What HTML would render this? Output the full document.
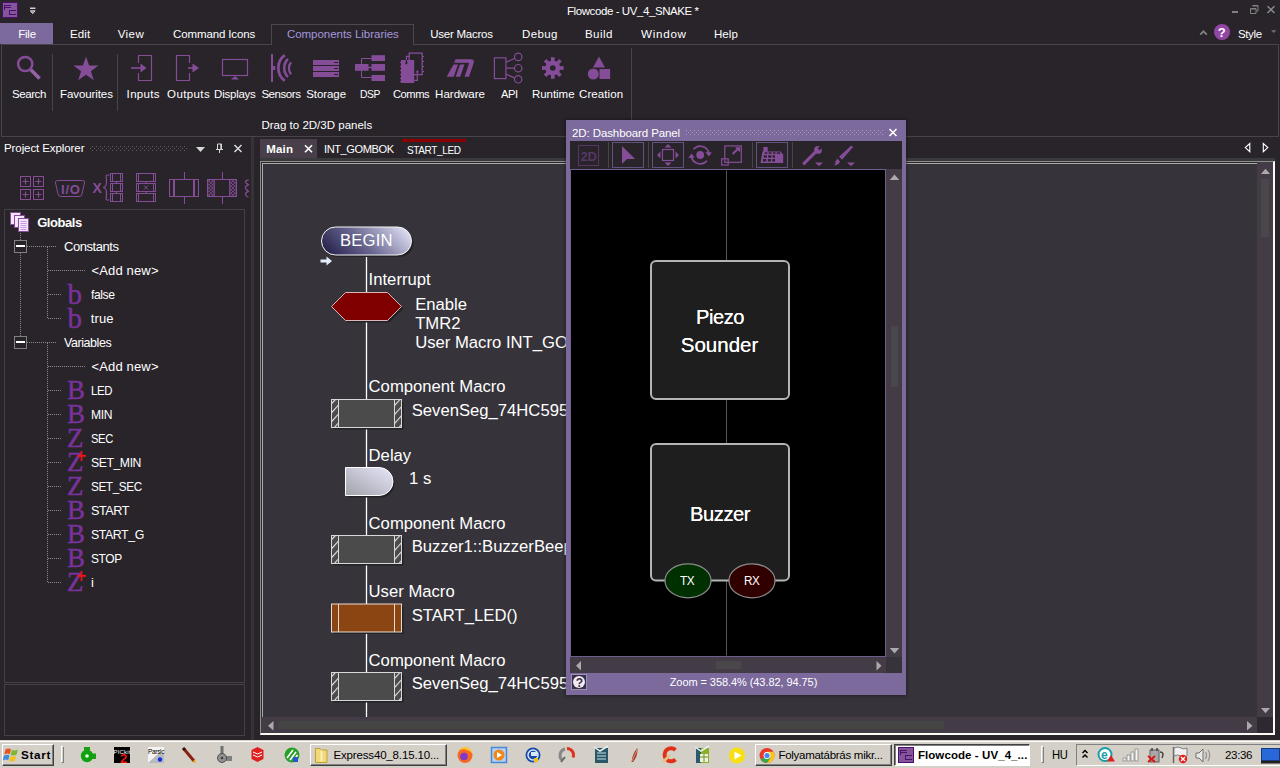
<!DOCTYPE html>
<html>
<head>
<meta charset="utf-8">
<title>Flowcode - UV_4_SNAKE *</title>
<style>
html,body{margin:0;padding:0;}
body{width:1280px;height:768px;overflow:hidden;background:#28242a;position:relative;
 font-family:"Liberation Sans",sans-serif;font-size:12px;color:#fff;}
.a{position:absolute;}
.t{position:absolute;white-space:nowrap;font-size:12px;color:#fff;}
svg{position:absolute;overflow:visible;}
.dot{position:absolute;height:1px;background:repeating-linear-gradient(90deg,#8e8492 0 1px,transparent 1px 2px);}
.dotv{position:absolute;width:1px;background:repeating-linear-gradient(180deg,#8e8492 0 1px,transparent 1px 2px);}
.tb{position:absolute;box-sizing:border-box;border:1px solid;border-color:#fff #404040 #404040 #fff;box-shadow:inset -1px -1px 0 #808080;background:#d4d0c8;}
</style>
</head>
<body>
<div class="a" style="left:2px;top:2px;width:14px;height:14px;background:#84559a;border:1px solid #4b0f6b;"></div>
<svg style="left:0;top:0" width="40" height="20"><path d="M4 5h7v1h-6v1h6v1h-6v2h-1zM9 10h7v1h-6v3h6v1h-7z" fill="#4b0f6b"/>
<path d="M30 7.400h5.400v1.500h-5.400z" fill="#d0d0d0"/><path d="M30.300 10.800h4.800l-2.400 2.900z" fill="#888" stroke="#e0e0e0" stroke-width="0.900"/></svg>
<div class="t" style="left:567.0px;top:5.3px;line-height:12px;letter-spacing:-0.42px;font-size:11.5px;">Flowcode - UV_4_SNAKE *</div>
<svg style="left:1226px;top:0" width="54" height="20">
 <rect x="6" y="11" width="6" height="2" fill="#808080"/>
 <path d="M26.500 5.500h5.500v5.500h-2M24.500 8.500h5.500v5h-5.500z" fill="none" stroke="#808080" stroke-width="1"/><path d="M26.500 6h5.500M24.500 9h5.500" stroke="#808080" stroke-width="1"/>
 <path d="M41.500 6.200l7 6.800M48.500 6.200l-7 6.800" stroke="#8a8a8a" stroke-width="1.500"/>
</svg>
<div class="a" style="left:0;top:23px;width:53px;height:21px;background:#7b6a9b;"></div>
<div class="a" style="left:1px;top:44px;width:1278px;height:93px;border:1px solid #47444a;box-sizing:border-box;"></div>
<div class="a" style="left:271px;top:24px;width:143px;height:21px;border:1px solid #4b484e;border-bottom:none;background:#28242a;box-sizing:border-box;"></div>
<div class="t" style="left:18.2px;top:28.2px;line-height:12px;letter-spacing:-0.21px;font-size:11.5px;">File</div>
<div class="t" style="left:70.0px;top:28.2px;line-height:12px;letter-spacing:0.09px;font-size:11.5px;">Edit</div>
<div class="t" style="left:117.7px;top:28.2px;line-height:12px;letter-spacing:0.43px;font-size:11.5px;">View</div>
<div class="t" style="left:173.1px;top:28.2px;line-height:12px;letter-spacing:-0.13px;font-size:11.5px;">Command Icons</div>
<div class="t" style="left:286.9px;top:28.2px;line-height:12px;letter-spacing:-0.03px;font-size:11.5px;color:#a596dc;">Components Libraries</div>
<div class="t" style="left:430.2px;top:28.2px;line-height:12px;letter-spacing:-0.24px;font-size:11.5px;">User Macros</div>
<div class="t" style="left:522.1px;top:28.2px;line-height:12px;letter-spacing:0.33px;font-size:11.5px;">Debug</div>
<div class="t" style="left:584.9px;top:28.2px;line-height:12px;letter-spacing:0.48px;font-size:11.5px;">Build</div>
<div class="t" style="left:640.7px;top:28.2px;line-height:12px;letter-spacing:0.70px;transform:scaleX(1.013);transform-origin:0 0;font-size:11.5px;">Window</div>
<div class="t" style="left:714.0px;top:28.2px;line-height:12px;letter-spacing:0.05px;font-size:11.5px;">Help</div>
<div class="t" style="left:1237.9px;top:28.2px;line-height:12px;letter-spacing:-0.34px;font-size:11.5px;">Style</div>
<svg style="left:1198px;top:24px" width="82" height="20">
 <path d="M2.200 10.600l3.300-3.300l3.300 3.300" fill="none" stroke="#808080" stroke-width="1.800"/>
 <circle cx="24" cy="8" r="8" fill="#9246a4"/>
 <path d="M73 6.300h5.400l-2.700 2.700z" fill="#707070"/>
</svg>
<div class="t" style="left:1217.8px;top:24.5px;line-height:15px;font-size:13px;font-weight:bold;">?</div>
<div class="t" style="left:12.1px;top:88.3px;line-height:12px;letter-spacing:-0.45px;font-size:11.5px;">Search</div>
<div class="t" style="left:60.1px;top:88.3px;line-height:12px;letter-spacing:-0.10px;font-size:11.5px;">Favourites</div>
<div class="t" style="left:126.6px;top:88.3px;line-height:12px;letter-spacing:0.34px;font-size:11.5px;">Inputs</div>
<div class="t" style="left:167.1px;top:88.3px;line-height:12px;letter-spacing:0.38px;font-size:11.5px;">Outputs</div>
<div class="t" style="left:214.1px;top:88.3px;line-height:12px;letter-spacing:-0.24px;font-size:11.5px;">Displays</div>
<div class="t" style="left:261.4px;top:88.3px;line-height:12px;letter-spacing:-0.45px;font-size:11.5px;">Sensors</div>
<div class="t" style="left:306.2px;top:88.3px;line-height:12px;letter-spacing:-0.06px;font-size:11.5px;">Storage</div>
<div class="t" style="left:360.2px;top:88.3px;line-height:12px;letter-spacing:-0.45px;transform:scaleX(0.897);transform-origin:0 0;font-size:11.5px;">DSP</div>
<div class="t" style="left:393.1px;top:88.3px;line-height:12px;letter-spacing:-0.45px;transform:scaleX(0.968);transform-origin:0 0;font-size:11.5px;">Comms</div>
<div class="t" style="left:435.1px;top:88.3px;line-height:12px;letter-spacing:0.01px;font-size:11.5px;">Hardware</div>
<div class="t" style="left:500.6px;top:88.3px;line-height:12px;letter-spacing:-0.45px;transform:scaleX(0.970);transform-origin:0 0;font-size:11.5px;">API</div>
<div class="t" style="left:532.0px;top:88.3px;line-height:12px;letter-spacing:-0.05px;font-size:11.5px;">Runtime</div>
<div class="t" style="left:579.0px;top:88.3px;line-height:12px;letter-spacing:0.09px;font-size:11.5px;">Creation</div>
<div class="t" style="left:261.4px;top:119.3px;line-height:12px;letter-spacing:0.01px;font-size:11.5px;">Drag to 2D/3D panels</div>
<div class="a" style="left:52px;top:54px;width:1px;height:57px;background:#47444a;"></div>
<div class="a" style="left:117px;top:54px;width:1px;height:57px;background:#47444a;"></div>
<div class="a" style="left:631px;top:48px;width:1px;height:72px;background:#47444a;"></div>
<svg style="left:0;top:0" width="640" height="136" fill="none" stroke="#854c97" stroke-width="1.200">
 <circle cx="25.200" cy="64" r="7.100" stroke-width="2.500"/>
 <path d="M30.800 69.800l8.800 8.700" stroke-width="3.600" stroke="#9562a6"/>
 <polygon points="86.0,56.4 89.1,65.4 98.600,65.500 90.900,71.200 93.800,80.300 86.0,74.800 78.200,80.300 81.100,71.200 73.400,65.500 82.900,65.400" fill="#854c97" stroke="none"/>
 <path d="M138.500 63V55.500h13v25h-13V73"/>
 <path d="M131 68h11" stroke-width="1.600"/><path d="M140.500 63.500l6 4.500l-6 4.500z" fill="#854c97" stroke="none"/>
 <path d="M189.500 63V55.500h-13v25h13V73"/>
 <path d="M188 68h6" stroke-width="1.600"/><path d="M192.500 63.500l6.500 4.500l-6.500 4.500z" fill="#854c97" stroke="none"/>
 <rect x="222.500" y="59.500" width="25" height="16"/>
 <path d="M231 79.500l4-3.500l4 3.500z" fill="#854c97" stroke="none"/>
 <path d="M272 54v28" stroke-width="2"/><path d="M273 68h2.200" stroke-width="4"/>
 <path d="M284.800 55.200a15.900 15.900 0 0 0 0 25.600" stroke-width="2.700"/>
 <path d="M287.950 59a12.700 12.700 0 0 0 0 18" stroke-width="2.500"/>
 <path d="M291.100 62.200a9.300 9.300 0 0 0 0 12" stroke-width="2.200"/>
 <g fill="#854c97" stroke="none"><rect x="313" y="60" width="26" height="5"/><rect x="313" y="66" width="26" height="5"/><rect x="313" y="72" width="26" height="5"/></g>
 <path d="M334 62.500h4M334 68.500h4M334 74.500h4" stroke="#28242a" stroke-width="1"/>
 <g fill="#854c97" stroke="none"><rect x="355" y="64" width="13.500" height="6.800"/><rect x="371.500" y="55.200" width="13.500" height="5.800"/><rect x="371.500" y="64" width="13.500" height="6.800"/><rect x="371.500" y="75" width="13.500" height="6"/></g>
 <path d="M368 67.500h4" stroke-width="1.400"/><path d="M361.500 64v-5.500h10M361.500 71v6.500h10" stroke-width="1"/>
 <rect x="409.200" y="53.100" width="13" height="21.600" stroke-width="1.300"/>
 <rect x="401" y="60" width="13.200" height="23" fill="#854c97" stroke="none"/>
 <path d="M400 62.500h1.200M400 66.500h1.200M400 70.500h1.200M400 74.500h1.200M400 78.500h1.200M400 81.500h1.200M422.500 56.500h1.500M422.500 61.500h1.500M422.500 66.500h1.500M422.500 71.500h1.500" stroke-width="1"/>
 <path d="M409.200 56.300h-2.800v4" stroke-width="1.200"/><path d="M406.400 60v3.500" stroke="#28242a" stroke-width="1.200"/><path d="M404.800 62.500h3.200l-1.600 2.200z" fill="#28242a" stroke="none"/>
 <path d="M414.200 80.400h3.100v-8" stroke-width="1.200"/><path d="M415.600 72.500h3.400l-1.700-2.400z" fill="#854c97" stroke="none"/>
 <g fill="#854c97" stroke="none">
  <path d="M455.500 59.300h14.500c3.500 0 4.500 1.200 3.600 4l-4.600 13.500h-4.500l4.300-12.500c0.400-1.200 0-1.500-1.200-1.500h-13.500z"/>
  <path d="M453.500 64.500h4.500l-4.300 12.300h-7z"/>
  <path d="M460 64.500h4.500l-4.300 12.300h-4.500z"/>
 </g>
 <rect x="494.400" y="57.800" width="11.500" height="20.800" stroke-width="1.200"/>
 <circle cx="518.200" cy="56.900" r="3.700" stroke-width="1.200"/><circle cx="518.200" cy="68.200" r="3.700" stroke-width="1.200"/><circle cx="518.200" cy="79.300" r="3.700" stroke-width="1.200"/>
 <path d="M506 68.200h8.400M506 62.300l9-4M506 74.100l9 4" stroke-width="1.200"/>
 <path fill="#854c97" stroke="none" fill-rule="evenodd" d="M551.0,60.700 L550.900,57.200 L554.700,57.200 L554.600,60.700 L556.700,61.600 L559.200,59.0 L561.800,61.600 L559.200,64.100 L560.100,66.200 L563.600,66.100 L563.600,69.900 L560.100,69.800 L559.200,71.900 L561.800,74.400 L559.200,77.0 L556.700,74.400 L554.600,75.300 L554.700,78.800 L550.900,78.800 L551.0,75.300 L548.900,74.400 L546.400,77.0 L543.800,74.400 L546.400,71.900 L545.500,69.800 L542.0,69.900 L542.0,66.100 L545.500,66.200 L546.400,64.100 L543.800,61.600 L546.400,59.0 L548.900,61.600Z M555.600 68a2.800 2.800 0 1 0 -5.600 0a2.800 2.800 0 1 0 5.600 0z"/>
 <g fill="#854c97" stroke="none"><path d="M599 56.500l6 11h-12z"/><circle cx="593.300" cy="74" r="5.500"/><rect x="599.500" y="69" width="10.600" height="10"/></g>
</svg>
<div class="t" style="left:4.0px;top:142.4px;line-height:12px;letter-spacing:-0.09px;font-size:11.5px;">Project Explorer</div>
<div class="a" style="left:4px;top:209px;width:241px;height:474px;border:1px solid #444146;box-sizing:border-box;"></div>
<div class="a" style="left:4px;top:684px;width:241px;height:52px;border:1px solid #444146;box-sizing:border-box;"></div>
<div class="a" style="left:251px;top:137px;width:3px;height:603px;background:#363338;"></div>
<svg style="left:0;top:138px" width="250" height="70" fill="none" stroke="#854c97" stroke-width="1">
 <defs><pattern id="grip" width="4" height="4" patternUnits="userSpaceOnUse"><rect x="0" y="0" width="1" height="1" fill="#625e66" stroke="none"/><rect x="2" y="2" width="1" height="1" fill="#625e66" stroke="none"/></pattern>
 <pattern id="xh" x="207.500" y="41.500" width="3.400" height="3.400" patternUnits="userSpaceOnUse"><path d="M0 0l3.400 3.400M3.400 0l-3.400 3.400" stroke="#854c97" stroke-width="0.800"/></pattern></defs>
 <rect x="90" y="7" width="97" height="7" fill="url(#grip)" stroke="none"/>
 <path d="M196 9h9l-4.500 5z" fill="#d8d8d8" stroke="none"/>
 <path d="M217.500 11.500v-5.500h4v5.500M216 11.500h7M219.500 11.500v3.500" stroke="#d8d8d8" stroke-width="1"/><path d="M221 6v5.500" stroke="#d8d8d8" stroke-width="1.400"/>
 <path d="M234.500 7l7 7M241.500 7l-7 7" stroke="#d8d8d8" stroke-width="1.500"/>
 <g><rect x="20.500" y="38.500" width="10" height="10"/><rect x="33.500" y="38.500" width="10" height="10"/><rect x="20.500" y="51.500" width="10" height="10"/><rect x="33.500" y="51.500" width="10" height="10"/>
 <path d="M22.500 43.500h6M25.500 40.500v6M35.500 43.500h6M38.500 40.500v6M22.500 56.500h6M25.500 53.500v6M35.500 56.500h6M38.500 53.500v6"/></g>
 <path d="M57.500 42.500h25q2.500 0 2 2.500l-2.500 11q-0.600 2.500-3 2.500h-18q-2.400 0-3-2.500l-2.500-11q-0.500-2.500 2-2.500z"/>
 <path d="M109.500 37c-5 0-3 0-3 6.500c0 4-1.500 6-3.500 6c2 0 3.500 2 3.500 6c0 6.500-2 6.500 3 6.500" stroke-width="1.200"/>
 <g><rect x="110.500" y="35.500" width="12" height="8"/><rect x="110.500" y="45.500" width="12" height="8"/><rect x="110.500" y="55.500" width="12" height="8"/><path d="M112.500 35.500v8M120.500 35.500v8M112.500 45.500v8M120.500 45.500v8M112.500 55.500v8M120.500 55.500v8M116.500 43.500v2M116.500 53.500v2"/></g>
 <g><rect x="136.500" y="35.500" width="19" height="8"/><rect x="136.500" y="45.500" width="19" height="8"/><rect x="136.500" y="55.500" width="19" height="8"/><path d="M138.500 35.500v8M153.500 35.500v8M138.500 45.500v8M153.500 45.500v8M138.500 55.500v8M153.500 55.500v8M146 43.500v2M146 53.500v2M144 47.500l4 4M148 47.500l-4 4"/></g>
 <g><rect x="169.500" y="41.500" width="29" height="17"/><path d="M174 41.500v17M194 41.500v17" stroke-width="2"/><path d="M184.500 34v7.500M184.500 58.500v7.500"/></g>
 <g><rect x="207.500" y="41.500" width="6.800" height="17" fill="url(#xh)"/><rect x="229.700" y="41.500" width="6.800" height="17" fill="url(#xh)"/><rect x="207.500" y="41.500" width="29" height="17"/><path d="M222.500 34v7.500M222.500 58.500v7.500"/></g>
 <path d="M248.700 41.800q-6.500 1.400-0.300 4.800q-6.200 3.200 0 6.500q-6.200 3.300 0 6.200" stroke-width="1.200"/>
</svg>
<div class="t" style="left:61.1px;top:181.5px;line-height:15px;letter-spacing:0.70px;font-size:13px;font-weight:bold;color:#854c97;">I/O</div>
<div class="t" style="left:92.6px;top:180.0px;line-height:16px;font-size:14px;font-weight:bold;color:#854c97;">X</div>
<svg style="left:10px;top:212px" width="22" height="22">
 <g fill="#f4e4fa" stroke="#854c97" stroke-width="1"><rect x="0.500" y="0.500" width="10" height="12"/><rect x="4.500" y="3.500" width="10" height="12"/><rect x="8.500" y="6.500" width="10" height="13"/></g>
 <path d="M10.500 9.500h6M10.500 11.500h6M10.500 13.500h6M10.500 15.500h6M10.500 17.500h6" stroke="#c79be0" stroke-width="1"/>
</svg>
<div class="t" style="left:37.2px;top:215.2px;line-height:15px;letter-spacing:-0.45px;font-size:13px;font-weight:bold;">Globals</div>
<div class="dotv" style="left:20px;top:233px;height:110px;"></div>
<div class="dotv" style="left:47px;top:247px;height:72px;"></div>
<div class="dotv" style="left:47px;top:343px;height:240px;"></div>
<div class="t" style="left:64.0px;top:239.2px;line-height:15px;letter-spacing:-0.45px;font-size:13px;">Constants</div>
<div class="dot" style="left:27px;top:246px;width:30px;"></div>
<div class="a" style="left:14px;top:240px;width:11px;height:11px;border:1px solid #808080;background:#28242a;"></div>
<div class="a" style="left:16px;top:245px;width:9px;height:2px;background:#fff;"></div>
<div class="t" style="left:91.5px;top:263.2px;line-height:15px;letter-spacing:0.15px;font-size:13px;">&lt;Add new&gt;</div>
<div class="dot" style="left:48px;top:270px;width:38px;"></div>
<div class="t" style="left:90.8px;top:287.2px;line-height:15px;letter-spacing:-0.45px;transform:scaleX(0.935);transform-origin:0 0;font-size:13px;">false</div>
<div class="t" style="left:67.6px;top:277.5px;line-height:32px;font-size:29px;color:#78329a;font-family:'Liberation Serif',serif;-webkit-text-stroke:0.45px #78329a;">b</div>
<div class="dot" style="left:48px;top:294px;width:14px;"></div>
<div class="t" style="left:90.8px;top:311.2px;line-height:15px;letter-spacing:0.10px;font-size:13px;">true</div>
<div class="t" style="left:67.6px;top:301.5px;line-height:32px;font-size:29px;color:#78329a;font-family:'Liberation Serif',serif;-webkit-text-stroke:0.45px #78329a;">b</div>
<div class="dot" style="left:48px;top:318px;width:14px;"></div>
<div class="t" style="left:64.0px;top:335.2px;line-height:15px;letter-spacing:-0.45px;transform:scaleX(0.961);transform-origin:0 0;font-size:13px;">Variables</div>
<div class="dot" style="left:27px;top:342px;width:30px;"></div>
<div class="a" style="left:14px;top:336px;width:11px;height:11px;border:1px solid #808080;background:#28242a;"></div>
<div class="a" style="left:16px;top:341px;width:9px;height:2px;background:#fff;"></div>
<div class="t" style="left:91.5px;top:359.2px;line-height:15px;letter-spacing:0.15px;font-size:13px;">&lt;Add new&gt;</div>
<div class="dot" style="left:48px;top:366px;width:38px;"></div>
<div class="t" style="left:90.8px;top:383.2px;line-height:15px;letter-spacing:-0.45px;transform:scaleX(0.877);transform-origin:0 0;font-size:13px;">LED</div>
<div class="t" style="left:66.9px;top:375.0px;line-height:30px;font-size:27px;color:#78329a;font-family:'Liberation Serif',serif;-webkit-text-stroke:0.45px #78329a;">B</div>
<div class="dot" style="left:48px;top:390px;width:14px;"></div>
<div class="t" style="left:90.8px;top:407.2px;line-height:15px;letter-spacing:-0.45px;transform:scaleX(0.933);transform-origin:0 0;font-size:13px;">MIN</div>
<div class="t" style="left:66.9px;top:399.0px;line-height:30px;font-size:27px;color:#78329a;font-family:'Liberation Serif',serif;-webkit-text-stroke:0.45px #78329a;">B</div>
<div class="dot" style="left:48px;top:414px;width:14px;"></div>
<div class="t" style="left:90.6px;top:431.2px;line-height:15px;letter-spacing:-0.45px;transform:scaleX(0.863);transform-origin:0 0;font-size:13px;">SEC</div>
<div class="t" style="left:66.9px;top:423.0px;line-height:30px;font-size:27px;color:#78329a;font-family:'Liberation Serif',serif;-webkit-text-stroke:0.45px #78329a;">Z</div>
<div class="dot" style="left:48px;top:438px;width:14px;"></div>
<div class="t" style="left:90.6px;top:455.2px;line-height:15px;letter-spacing:-0.45px;transform:scaleX(0.940);transform-origin:0 0;font-size:13px;">SET_MIN</div>
<div class="t" style="left:66.9px;top:447.0px;line-height:30px;font-size:27px;color:#78329a;font-family:'Liberation Serif',serif;-webkit-text-stroke:0.45px #78329a;">Z</div>
<svg style="left:77px;top:451px" width="9" height="10"><path d="M0 4.800h9M4.500 0v10" stroke="#f01414" stroke-width="1.700"/></svg>
<div class="dot" style="left:48px;top:462px;width:14px;"></div>
<div class="t" style="left:90.6px;top:479.2px;line-height:15px;letter-spacing:-0.45px;transform:scaleX(0.904);transform-origin:0 0;font-size:13px;">SET_SEC</div>
<div class="t" style="left:66.9px;top:471.0px;line-height:30px;font-size:27px;color:#78329a;font-family:'Liberation Serif',serif;-webkit-text-stroke:0.45px #78329a;">Z</div>
<div class="dot" style="left:48px;top:486px;width:14px;"></div>
<div class="t" style="left:90.6px;top:503.2px;line-height:15px;letter-spacing:-0.45px;transform:scaleX(0.972);transform-origin:0 0;font-size:13px;">START</div>
<div class="t" style="left:66.9px;top:495.0px;line-height:30px;font-size:27px;color:#78329a;font-family:'Liberation Serif',serif;-webkit-text-stroke:0.45px #78329a;">B</div>
<div class="dot" style="left:48px;top:510px;width:14px;"></div>
<div class="t" style="left:90.6px;top:527.2px;line-height:15px;letter-spacing:-0.45px;transform:scaleX(0.951);transform-origin:0 0;font-size:13px;">START_G</div>
<div class="t" style="left:66.9px;top:519.0px;line-height:30px;font-size:27px;color:#78329a;font-family:'Liberation Serif',serif;-webkit-text-stroke:0.45px #78329a;">B</div>
<div class="dot" style="left:48px;top:534px;width:14px;"></div>
<div class="t" style="left:90.6px;top:551.2px;line-height:15px;letter-spacing:-0.45px;transform:scaleX(0.920);transform-origin:0 0;font-size:13px;">STOP</div>
<div class="t" style="left:66.9px;top:543.0px;line-height:30px;font-size:27px;color:#78329a;font-family:'Liberation Serif',serif;-webkit-text-stroke:0.45px #78329a;">B</div>
<div class="dot" style="left:48px;top:558px;width:14px;"></div>
<div class="t" style="left:91.1px;top:575.2px;line-height:15px;font-size:13px;">i</div>
<div class="t" style="left:66.9px;top:567.0px;line-height:30px;font-size:27px;color:#78329a;font-family:'Liberation Serif',serif;-webkit-text-stroke:0.45px #78329a;">Z</div>
<svg style="left:77px;top:571px" width="9" height="10"><path d="M0 4.800h9M4.500 0v10" stroke="#f01414" stroke-width="1.700"/></svg>
<div class="dot" style="left:48px;top:582px;width:14px;"></div>
<div class="a" style="left:260px;top:139px;width:57px;height:19px;background:#483f4a;"></div>
<div class="a" style="left:260px;top:158px;width:1015px;height:3px;background:#3a393c;"></div>
<div class="t" style="left:266.2px;top:142.6px;line-height:12px;letter-spacing:0.20px;font-size:11.5px;font-weight:bold;">Main</div>
<svg style="left:304px;top:144px" width="10" height="10"><path d="M1 1.200l7 7M8 1.200l-7 7" stroke="#fff" stroke-width="1.600"/></svg>
<div class="t" style="left:323.8px;top:142.6px;line-height:12px;letter-spacing:-0.45px;transform:scaleX(0.965);transform-origin:0 0;font-size:11.5px;">INT_GOMBOK</div>
<div class="t" style="left:406.9px;top:144.2px;line-height:12px;letter-spacing:-0.45px;transform:scaleX(0.874);transform-origin:0 0;font-size:11.5px;">START_LED</div>
<div class="a" style="left:402px;top:139px;width:64px;height:3px;background:#8b0000;"></div>
<svg style="left:0;top:0" width="1280" height="160"><path d="M1249.800 143.500v8.200l-4.500-4.100zM1263.300 143.500v8.200l4.500-4.100z" fill="none" stroke="#fff" stroke-width="1.100"/></svg>
<div class="a" style="left:260px;top:161px;width:1015px;height:574px;background:#36343a;box-sizing:border-box;border-style:solid;border-width:1px 2px 2px 1px;border-color:#8e8e88 #fbfbf3 #fbfbf3 #8e8e88;"></div>
<div class="a" style="left:261px;top:162px;width:996px;height:555px;box-sizing:border-box;border-style:solid;border-width:1px 0 0 1px;border-color:#2c2a2e;"></div>
<div class="a" style="left:262px;top:163px;width:995px;height:554px;box-sizing:border-box;border-style:solid;border-width:1px 0 0 1px;border-color:#aaaaa2;"></div>
<div class="a" style="left:1257px;top:162px;width:16px;height:555px;background:#433b45;"></div>
<div class="a" style="left:261px;top:717px;width:996px;height:16px;background:#433b45;"></div>
<div class="a" style="left:1257px;top:717px;width:16px;height:16px;background:#2e2830;"></div>
<div class="a" style="left:1261px;top:179px;width:8px;height:58px;background:#4a474b;"></div>
<div class="a" style="left:278px;top:721px;width:666px;height:8px;background:#464546;"></div>
<svg style="left:0;top:0" width="1280" height="740" fill="#aaa">
 <path d="M1261 174h9l-4.500-5.200zM1261 708h9l-4.500 5.200z"/>
 <path d="M1247 721v9.500l5.500-4.750zM273.500 721v9.500l-5.500-4.750z"/>
</svg>
<svg style="left:0;top:0" width="566" height="717">
 <defs>
  <linearGradient id="gbeg" x1="0" y1="0.600" x2="1" y2="0.300"><stop offset="0" stop-color="#2a2850"/><stop offset="0.450" stop-color="#6c6a92"/><stop offset="1" stop-color="#dcdcf2"/></linearGradient>
  <linearGradient id="gdel" x1="1" y1="0" x2="0" y2="1"><stop offset="0" stop-color="#e6e6fa"/><stop offset="1" stop-color="#a2a2aa"/></linearGradient>
  <pattern id="hat" width="6" height="6" patternUnits="userSpaceOnUse" patternTransform="rotate(-48)"><rect width="6" height="6" fill="#4b4b4b"/><rect width="6" height="1.100" fill="#e8e8e8"/></pattern>
 </defs>
 <path d="M366.500 255v462" stroke="#fff" stroke-width="1.300"/>
 <rect x="323.500" y="229" width="90" height="28" rx="14" fill="#242226"/>
 <rect x="321.500" y="227" width="90" height="28" rx="14" fill="url(#gbeg)" stroke="#f4f4f4" stroke-width="1"/>
 <path d="M320.500 259.500h6v-3l5.500 4.500l-5.500 4.500v-3h-6z" fill="#e4ecfc"/>
 <path d="M333.500 308.500l14-14h42l14 14l-14 14h-42z" fill="#242226"/>
 <path d="M331.500 306.500l14-14h42l14 14l-14 14h-42z" fill="#800000" stroke="#d8b8b8" stroke-width="1"/>
 <g id="cm"><rect x="333.500" y="401.500" width="70" height="28" fill="#242226"/><rect x="331.500" y="399.500" width="70" height="28" fill="url(#hat)" stroke="#d8d8d8"/><rect x="338.500" y="399.500" width="56" height="28" fill="#4b4b4b" stroke="#d8d8d8"/></g>
 <use href="#cm" y="136"/><use href="#cm" y="273"/>
 <path d="M347.500 469.500h33a14 14 0 0 1 0 28h-33z" fill="#242226"/>
 <path d="M345.500 467.500h33.500a14 14 0 0 1 0 28h-33.500z" fill="url(#gdel)" stroke="#fff" stroke-width="1"/>
 <rect x="333.500" y="606" width="70" height="28" fill="#242226"/>
 <rect x="331.500" y="604" width="70" height="28" fill="#8b4513" stroke="#e8dcd0"/>
 <path d="M338.500 604v28M394.500 604v28" stroke="#e8dcd0"/>
</svg>
<div class="t" style="left:339.9px;top:230.7px;line-height:19px;letter-spacing:0.23px;font-size:16.67px;">BEGIN</div>
<div class="t" style="left:368.6px;top:270.3px;line-height:19px;font-size:16.67px;">Interrupt</div>
<div class="t" style="left:415.2px;top:294.8px;line-height:19px;font-size:16.67px;">Enable</div>
<div class="t" style="left:415.2px;top:313.7px;line-height:19px;font-size:16.67px;">TMR2</div>
<div class="a" style="left:414.2px;top:330.6px;width:151.8px;height:22px;overflow:hidden;"><div class="t" style="left:1.0px;top:2.0px;line-height:19px;font-size:16.67px;">User Macro INT_GOMBOK</div></div>
<div class="t" style="left:368.6px;top:376.9px;line-height:19px;font-size:16.67px;">Component Macro</div>
<div class="a" style="left:410.7px;top:399.2px;width:155.3px;height:22px;overflow:hidden;"><div class="t" style="left:1.0px;top:2.0px;line-height:19px;font-size:16.67px;">SevenSeg_74HC595</div></div>
<div class="t" style="left:368.6px;top:446.0px;line-height:19px;font-size:16.67px;">Delay</div>
<div class="t" style="left:409.0px;top:469.2px;line-height:19px;font-size:16.67px;">1 s</div>
<div class="t" style="left:368.6px;top:514.0px;line-height:19px;font-size:16.67px;">Component Macro</div>
<div class="a" style="left:410.7px;top:535.3px;width:155.3px;height:22px;overflow:hidden;"><div class="t" style="left:1.0px;top:2.0px;line-height:19px;font-size:16.67px;">Buzzer1::BuzzerBeep</div></div>
<div class="t" style="left:368.6px;top:582.3px;line-height:19px;font-size:16.67px;">User Macro</div>
<div class="t" style="left:411.7px;top:606.3px;line-height:19px;font-size:16.67px;">START_LED()</div>
<div class="t" style="left:368.6px;top:651.3px;line-height:19px;font-size:16.67px;">Component Macro</div>
<div class="a" style="left:410.7px;top:672.3px;width:155.3px;height:22px;overflow:hidden;"><div class="t" style="left:1.0px;top:2.0px;line-height:19px;font-size:16.67px;">SevenSeg_74HC595</div></div>
<div class="a" style="left:566px;top:120px;width:340px;height:575px;background:#7b6a9b;box-shadow:0 0 3px 1px rgba(10,8,12,0.4);"></div>
<div class="a" style="left:570px;top:141px;width:332px;height:29px;background:#28242a;"></div>
<div class="a" style="left:570px;top:169px;width:332px;height:504px;background:#433b45;"></div>
<div class="a" style="left:571px;top:170px;width:314px;height:486px;background:#000;box-shadow:0 0 0 1px #6e5e8c;"></div>
<div class="a" style="left:886px;top:657px;width:16px;height:16px;background:#36343a;"></div>
<div class="a" style="left:891px;top:326px;width:7px;height:61px;background:#4a474b;"></div>
<div class="a" style="left:716px;top:661px;width:25px;height:8px;background:#4a474b;"></div>
<div class="t" style="left:572.0px;top:127.2px;line-height:12px;letter-spacing:-0.10px;font-size:11.5px;">2D: Dashboard Panel</div>
<svg style="left:0;top:0" width="910" height="700" fill="none" stroke="#854c97" stroke-width="1">
 <defs><pattern id="grip2" width="4" height="4" patternUnits="userSpaceOnUse"><rect x="0" y="0" width="1" height="1" fill="#a898c4" stroke="none"/><rect x="2" y="2" width="1" height="1" fill="#a898c4" stroke="none"/></pattern></defs>
 <rect x="686" y="130" width="198" height="6" fill="url(#grip2)" stroke="none"/>
 <path d="M889.500 129l7 7M896.500 129l-7 7" stroke="#fff" stroke-width="1.600"/>
 <!-- 2D button (disabled) -->
 <rect x="578.500" y="145.500" width="20" height="20" stroke="#553664"/>
 <!-- separators -->
 <path d="M608.500 142v26M648.500 142v26M752.500 142v26M792.500 142v26" stroke="#47444a"/>
 <!-- play -->
 <rect x="612.500" y="142.500" width="31" height="25" stroke="#62527e"/>
 <path d="M622 146.200v17.500l4.800-4.600l8 0z" fill="#854c97" stroke="none"/><path d="M622 146.200l13 12.900h-8.200l-4.800 4.600z" fill="#854c97" stroke="none"/>
 <!-- move -->
 <rect x="652.500" y="142.500" width="31" height="25" stroke="#62527e"/>
 <rect x="662.500" y="149.500" width="11" height="11" stroke-width="1.200"/>
 <path d="M664.500 147.500l3.500-3.500l3.500 3.500zM664.500 162.500l3.500 3.500l3.500-3.500zM660.500 151.500l-3.500 3.500l3.500 3.500zM675.500 151.500l3.500 3.500l-3.500 3.500z" fill="#854c97" stroke="none"/>
 <!-- rotate -->
 <circle cx="700.200" cy="155" r="3.900" fill="#854c97" stroke="none"/>
 <path d="M693.500 149.300a8.800 8.800 0 0 1 15.400 4.200M706.900 160.700a8.800 8.800 0 0 1 -15.400-4.200" stroke-width="1.700"/>
 <path d="M705.300 152l6.700 0.500l-3.200 3.900zM688.200 158l6.600-0.500l-3.300-3.900z" fill="#854c97" stroke="none"/>
 <!-- resize -->
 <rect x="724.800" y="145.900" width="16.500" height="16.400" stroke-width="1.200"/>
 <rect x="721.600" y="158.800" width="6.600" height="6.200" stroke-width="1.200"/>
 <path d="M732.600 154l5.500-5.300" stroke-width="2"/><path d="M735 147.300h5.200v5.300z" fill="#854c97" stroke="none"/>
 <!-- grid button -->
 <rect x="756.500" y="142.500" width="31" height="25" stroke="#62527e"/>
 <path d="M763.300 147h4.400v4.500h12.800l2.700 3v8.500h-22.700l2-11.500h0.800z" fill="#854c97" stroke="none"/>
 <g fill="#28242a" stroke="none"><rect x="764.800" y="152.300" width="2.600" height="1.500"/><rect x="768.700" y="152.300" width="2.900" height="1.500"/><rect x="773" y="152.300" width="2.500" height="1.500"/><rect x="776.800" y="152.300" width="3.400" height="1.500"/>
 <rect x="763.800" y="155.300" width="3" height="2.300"/><rect x="768.200" y="155.300" width="3.100" height="2.300"/><rect x="772.600" y="155.300" width="2.400" height="2.300"/>
 <rect x="763" y="159.100" width="3.200" height="2.400"/><rect x="767.800" y="159.100" width="3.200" height="2.400"/><rect x="772.400" y="159.100" width="2.600" height="2.400"/></g>
 <!-- wrench -->
 <path d="M803.200 164.300l12.200-12.200" stroke-width="3.100"/>
 <circle cx="818" cy="149.900" r="3.900" fill="#854c97" stroke="none"/>
 <path d="M818.700 149.200l4.500-4.500" stroke="#28242a" stroke-width="2.700"/>
 <path d="M815 162.500h8l-4 3.800z" fill="#854c97" stroke="none"/>
 <!-- brush -->
 <path d="M839 156.800l12.300-11.400l1.800 1.600l-11.100 12.800z" fill="#854c97" stroke="none"/>
 <path d="M836.800 158.200l3.200 3c-0.500 2.800-3.500 4.300-6 4c1.600-1.200 1.800-2.700 1.200-4c1.300-0.700 1.800-1.700 1.600-3z" fill="#854c97" stroke="none"/>
 <path d="M847 162.500h8l-4 3.800z" fill="#854c97" stroke="none"/>
 <!-- scroll arrows -->
 <g fill="#aaa" stroke="none"><path d="M889.700 180h9.600l-4.800-5.400zM889.700 648h9.600l-4.800 5.400zM581 661v9.500l-5-4.750zM876.500 661v9.500l5-4.750z"/></g>
 <!-- content -->
 <path d="M726.500 170.500v485" stroke="#565656"/>
 <rect x="651" y="261" width="138" height="138" rx="5" fill="#1e1e1e" stroke="#b4b4b4" stroke-width="2"/>
 <rect x="651" y="444" width="138" height="136.500" rx="5" fill="#1e1e1e" stroke="#b4b4b4" stroke-width="2"/>
 <ellipse cx="688" cy="580.800" rx="23" ry="17" fill="#003000" stroke="#8a8a8a" stroke-width="1.200"/>
 <ellipse cx="752" cy="580.800" rx="23" ry="17" fill="#300000" stroke="#8a8a8a" stroke-width="1.200"/>
 <!-- help icon -->
 <rect x="571.500" y="674.500" width="15" height="15" fill="#3a2e48" stroke="#9c90b4"/>
 <circle cx="579" cy="682" r="6" fill="#f0ecf4" stroke="none"/>
</svg>
<div class="t" style="left:580.6px;top:148.5px;line-height:15px;letter-spacing:-0.32px;font-size:13px;font-weight:bold;color:#553664;">2D</div>
<div class="t" style="left:695.9px;top:305.4px;line-height:23px;letter-spacing:-0.45px;transform:scaleX(0.980);transform-origin:0 0;font-size:20.5px;text-shadow:0 0 0.6px #fff;">Piezo</div>
<div class="t" style="left:680.8px;top:332.7px;line-height:23px;letter-spacing:-0.00px;font-size:20.5px;text-shadow:0 0 0.6px #fff;">Sounder</div>
<div class="t" style="left:689.6px;top:502.0px;line-height:23px;letter-spacing:-0.45px;transform:scaleX(0.983);transform-origin:0 0;font-size:20.5px;text-shadow:0 0 0.6px #fff;">Buzzer</div>
<div class="t" style="left:680.4px;top:574.2px;line-height:14px;letter-spacing:-0.45px;transform:scaleX(0.981);transform-origin:0 0;">TX</div>
<div class="t" style="left:744.0px;top:574.2px;line-height:14px;letter-spacing:-0.45px;transform:scaleX(0.974);transform-origin:0 0;">RX</div>
<div class="t" style="left:575.8px;top:675.5px;line-height:14px;font-weight:bold;color:#3a2e48;">?</div>
<div class="t" style="left:669.7px;top:675.5px;line-height:12px;letter-spacing:-0.07px;font-size:11px;">Zoom = 358.4% (43.82, 94.75)</div>
<div class="a" style="left:0;top:740px;width:1280px;height:28px;background:#d4d0c8;"></div>
<div class="a" style="left:0;top:741px;width:1280px;height:1px;background:#fff;"></div>
<div class="tb" style="left:2px;top:744px;width:52px;height:22px;"></div>
<svg style="left:4px;top:746px" width="16" height="16">
 <path d="M1.500 3.500q3-2 5.500-0.200l-1.300 5q-2.700-1.600-5.500 0.300z" fill="#e8541c"/>
 <path d="M8 3.800q3 1.600 6-0.300l-1.400 5q-3 1.800-5.900 0.200z" fill="#7cb82c"/>
 <path d="M0 9.800q2.800-2 5.500-0.300l-1.300 4.800q-2.700-1.700-5.500 0.300z" fill="#3c8ce0"/>
 <path d="M6.400 10q3 1.600 5.900-0.200l-1.300 4.800q-3 1.800-5.900 0.200z" fill="#f4c020"/>
</svg>
<div class="t" style="left:20.9px;top:748.8px;line-height:12px;letter-spacing:0.70px;transform:scaleX(1.017);transform-origin:0 0;font-size:11.5px;font-weight:bold;color:#000;">Start</div>
<div class="a" style="left:61px;top:746px;width:3px;height:17px;box-sizing:border-box;border:1px solid;border-color:#fff #808080 #808080 #fff;"></div>
<div class="a" style="left:1041px;top:746px;width:3px;height:17px;box-sizing:border-box;border:1px solid;border-color:#fff #808080 #808080 #fff;"></div>
<div class="tb" style="left:310px;top:744px;width:137px;height:22px;"></div>
<div class="tb" style="left:755px;top:744px;width:137px;height:22px;"></div>
<svg style="left:0;top:742px" width="1280" height="26">
 <!-- green joystick 87 -->
 <rect x="84" y="5" width="6" height="6" fill="#18a018"/><rect x="91" y="11.500" width="5" height="5.500" fill="#18a018"/>
 <circle cx="87" cy="14" r="6.200" fill="#10a010"/><circle cx="87" cy="14" r="1.800" fill="#e8ffe8"/>
 <!-- pickit 114-130 -->
 <rect x="114" y="5" width="16" height="16" fill="#000"/>
 <!-- parsic 148-164 -->
 <rect x="148" y="5" width="16" height="16" fill="#f4f4f4"/><path d="M148 21l10-9h6v9z" fill="#b8b8c0"/><circle cx="160" cy="17.500" r="2.200" fill="#1030e0"/>
 <!-- pencil 189 -->
 <path d="M184 7l10 12" stroke="#8a2010" stroke-width="3"/><path d="M183 6l1.800 2" stroke="#301008" stroke-width="3"/><path d="M193.500 18.500l1.800 2" stroke="#e0b000" stroke-width="2"/>
 <!-- robot arm 224 -->
 <rect x="220.500" y="4" width="3" height="9" fill="#707070"/><rect x="225" y="14" width="7" height="5" fill="#808080"/><circle cx="222" cy="16" r="4.500" fill="#909090" stroke="#505050"/><circle cx="222" cy="16" r="1.300" fill="#404040"/>
 <!-- sketchup 257 -->
 <path d="M251.500 8l6-3l6 3v9l-6 3l-6-3z" fill="#e02020"/><path d="M253 10l4.500 2l4.500-2M253 13l4.500 2l4.500-2" stroke="#fff" stroke-width="1" fill="none"/>
 <!-- green circle 292 -->
 <circle cx="292" cy="13" r="7.500" fill="#28a028"/><path d="M287 16l6-8M290 18l6-8M293.500 19l4-6" stroke="#fff" stroke-width="1.600"/><rect x="293" y="15" width="5" height="5" fill="#2858c8"/>
 <!-- folder 313-327 -->
 <path d="M315.500 6.500h4.500l1.500 1.500h5.500v12.500h-11.500z" fill="#f2d878" stroke="#c0a030"/><path d="M321.500 8.500v11" stroke="#fbf0b8" stroke-width="2"/>
 <!-- firefox 465 -->
 <circle cx="465" cy="13.500" r="7.500" fill="#f86820"/><path d="M459 8q3-4 9-2.500q4 2.500 4.500 7q-2-4-5-4q-3-2-8.500-0.500z" fill="#fcc428"/><circle cx="464" cy="14.500" r="3.800" fill="#8038c8"/>
 <!-- wmp 499 -->
 <rect x="491.500" y="5.500" width="15" height="15" fill="#b4d0f2" stroke="#4888d8" stroke-width="1.500"/><circle cx="499" cy="13" r="5.500" fill="#f08818"/><path d="M497 10v6l5-3z" fill="#fff"/>
 <!-- globe 533 -->
 <circle cx="533" cy="13" r="7.500" fill="#1848a8"/><circle cx="533" cy="13" r="5" fill="none" stroke="#d8e8f8" stroke-width="1.500"/><rect x="531" y="10" width="6" height="4" fill="#d8e8f8"/><rect x="534" y="16" width="4" height="4" fill="#e8c020"/>
 <!-- ring 567 -->
 <path d="M562 18a6.500 6.500 0 0 1 3-11" stroke="#888" stroke-width="3" fill="none"/><path d="M567 6.500a6.500 6.500 0 0 1 6 9" stroke="#e03020" stroke-width="3" fill="none"/><path d="M561 20l4-5" stroke="#666" stroke-width="2"/>
 <!-- teal doc 601 -->
 <rect x="595" y="6" width="13" height="15" fill="#285868"/><path d="M597 11h9M597 14h9M597 17h9" stroke="#c8e0e8" stroke-width="1.200"/><path d="M594 5l6 4l8-5" stroke="#e8f0f0" stroke-width="1.500" fill="none"/>
 <!-- red feather 635 -->
 <path d="M631.500 20q1-9 6-14q0.500 8-4.500 14z" fill="#a83828"/><path d="M632 19l5-11" stroke="#e8b0a0" stroke-width="0.800"/>
 <!-- ccleaner 670 -->
 <path d="M675.500 8a6.500 6.500 0 1 0 0 9.500" stroke="#e03018" stroke-width="4" fill="none"/><path d="M662 19l7-7l2 2l-6 6z" fill="#e8c080"/>
 <!-- calc doc 702 -->
 <rect x="696" y="6" width="13" height="15" fill="#8cb024"/><rect x="696" y="6" width="5" height="15" fill="#2a5a6c"/><rect x="700" y="12" width="8" height="8" fill="#eef4dc"/><path d="M700 15h8M704 12v8" stroke="#6c9020"/><path d="M695 5l6 4l8-5" stroke="#e8f0f0" stroke-width="1.500" fill="none"/>
 <!-- yellow play 737 -->
 <circle cx="737" cy="13.500" r="8" fill="#f8e010"/><path d="M734.500 9.500v8l7-4z" fill="#fff"/>
 <!-- chrome 767 -->
 <circle cx="767" cy="13.500" r="7.500" fill="#e83828"/><path d="M767 13.500l-6.500 3.750a7.500 7.500 0 0 0 6.500 3.750l3.500-5z" fill="#38a848"/><path d="M767 13.500l3.500 2.500l-3.500 5a7.500 7.500 0 0 0 6.500-11.250h-6.500z" fill="#f8c818"/><circle cx="767" cy="13.500" r="3.400" fill="#fff"/><circle cx="767" cy="13.500" r="2.600" fill="#4888f0"/>
</svg>
<div class="t" style="left:113.6px;top:749.0px;line-height:6px;letter-spacing:0.16px;font-size:6px;color:#fff;">PICkit</div>
<div class="t" style="left:120.1px;top:751.0px;line-height:15px;font-size:13px;font-weight:bold;color:#f01010;">2</div>
<div class="t" style="left:148.1px;top:748.0px;line-height:7px;letter-spacing:-0.35px;font-size:6.5px;color:#000;">Parsic</div>
<div class="t" style="left:333.4px;top:748.8px;line-height:12px;letter-spacing:-0.15px;font-size:11.5px;color:#000;">Express40_8.15.10...</div>
<div class="t" style="left:778.4px;top:748.8px;line-height:12px;letter-spacing:-0.27px;font-size:11.5px;color:#000;">Folyamatábrás mikr...</div>
<div class="a" style="left:894px;top:744px;width:136px;height:22px;box-sizing:border-box;background:#fff;border:1px solid;border-color:#404040 #fff #fff #404040;box-shadow:inset 1px 1px 0 #808080;"></div>
<svg style="left:898px;top:747px" width="16" height="16"><rect x="0.500" y="0.500" width="15" height="15" fill="#84559a" stroke="#4b0f6b"/><path d="M2 3h7v1h-6v1h6v1h-6v2h-1zM7 8h7v1h-6v3h6v1h-7z" fill="#4b0f6b"/></svg>
<div class="t" style="left:917.9px;top:749.0px;line-height:12px;letter-spacing:0.08px;font-size:11.5px;font-weight:bold;color:#000;">Flowcode - UV_4_...</div>
<div class="t" style="left:1052.1px;top:748.0px;line-height:14px;letter-spacing:-0.45px;transform:scaleX(0.936);transform-origin:0 0;color:#000;">HU</div>
<div class="a" style="left:1076px;top:744px;width:206px;height:22px;box-sizing:border-box;border:1px solid;border-color:#808080 #fff #fff #808080;"></div>
<svg style="left:1076px;top:742px" width="204" height="26">
 <path d="M6.500 11l2.500-2.500l2.500 2.500M6.500 15.500l2.500-2.500l2.500 2.500" stroke="#000" stroke-width="1.500" fill="none"/>
 <circle cx="29" cy="12.500" r="6.500" fill="#fff" stroke="#18a0a8" stroke-width="2"/>
 <path d="M31 19.500l4-6.500l4 6.500z" fill="#e02020"/>
 <path d="M47 19h3v-3h-3zM51 19h3v-6h-3zM55 19h3v-9h-3zM59 19h3v-12h-3z" fill="#f4f4f4" stroke="#888" stroke-width="0.800"/>
 <rect x="74" y="8" width="9" height="12" fill="#a8a8a8" stroke="#606060"/><path d="M76 6v3M81 6v3" stroke="#404040" stroke-width="1.500"/><path d="M84 10c3 0 4 2 2 6" stroke="#404040" fill="none" stroke-width="1.500"/><path d="M72 14l7 6M79 14l-7 6" stroke="#e01010" stroke-width="1.800"/>
 <path d="M97.500 5v16" stroke="#606060" stroke-width="1.400"/><path d="M98 6q4-2 7 0t6 0v8q-3 2-6 0t-7 0z" fill="#f0f0f0" stroke="#808080"/><circle cx="107" cy="17" r="4.200" fill="#e02020"/><path d="M105 15l4 4M109 15l-4 4" stroke="#fff" stroke-width="1.300"/>
 <path d="M120 11h3l4-4v13l-4-4h-3z" fill="#e8e8e8" stroke="#707070"/><path d="M129.500 10q2 3 0 7M132 8q3.500 5 0 11" stroke="#909090" fill="none" stroke-width="1.200"/>
 <rect x="185.500" y="6.500" width="18" height="12" fill="#2868d8" stroke="#183878"/><rect x="185" y="19" width="19" height="2.500" fill="#202020"/>
</svg>
<div class="t" style="left:1101.1px;top:747.5px;line-height:14px;font-weight:bold;color:#18a0a8;">e</div>
<div class="t" style="left:1225.1px;top:749.0px;line-height:12px;letter-spacing:-0.37px;font-size:11.5px;color:#000;">23:36</div>
</body>
</html>
